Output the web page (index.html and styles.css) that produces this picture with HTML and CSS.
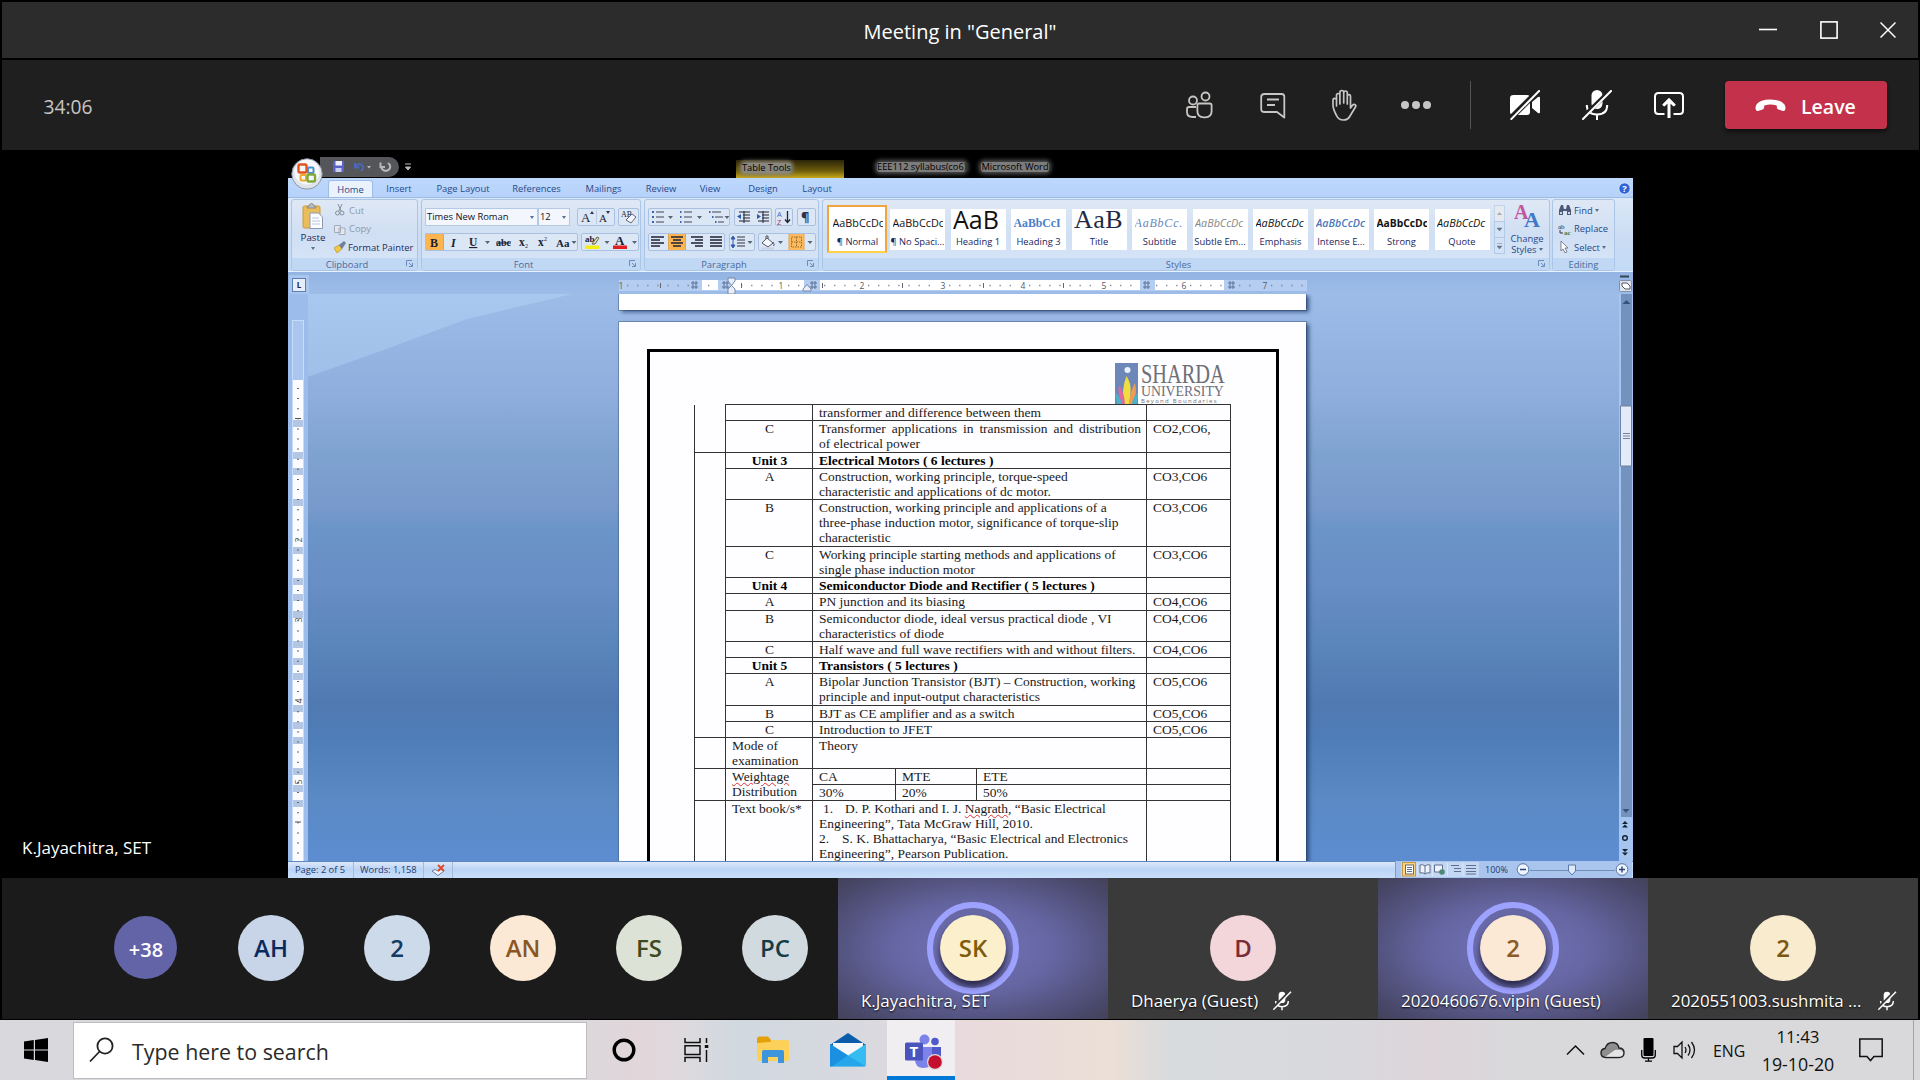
FILE: index.html
```html
<!DOCTYPE html>
<html lang="en">
<head>
<meta charset="utf-8">
<title>Meeting in "General"</title>
<link rel="stylesheet" href="styles.css">
</head>
<body>
<div class="screen">
  <header class="titlebar">
    <span class="side"></span>
    <h1>Meeting in "General"</h1>
    <div class="side winbtns">
      <svg width="18" height="20"><path d="M0 9.5h18" stroke="#fff" stroke-width="1.6"/></svg>
      <svg width="18" height="20"><rect x=".9" y="1.9" width="16.2" height="16.2" fill="none" stroke="#fff" stroke-width="1.6"/></svg>
      <svg width="16" height="20"><path d="M.5 2.5l15 15M15.5 2.5l-15 15" stroke="#fff" stroke-width="1.5"/></svg>
    </div>
  </header>

  <div class="toolbar">
    <span class="timer">34:06</span>
    <div class="tools">
      <svg width="28" height="30" class="i-people" fill="none" stroke="#c8c6c4" stroke-width="1.8"><circle cx="7" cy="10.5" r="4"/><circle cx="19.5" cy="6.5" r="4"/><path d="M10 17H3.2Q1 17 1 19.2V22q0 5 5.5 5H10M13.2 13.5h10.6q1.8 0 1.8 1.8v6q0 6-6.3 6h-1.6q-6.3 0-6.3-6v-6q0-1.8 1.8-1.8z"/></svg>
      <svg width="26" height="30" class="i-chat" fill="none" stroke="#c8c6c4" stroke-width="1.8"><path d="M4.500 4h17q2.800 0 2.800 2.800V27.500L17 22H4.500Q1.200 22 1.200 19V7q0-3 3.300-3zM7 9.500h12M7 15h8" stroke-linejoin="round"/></svg>
      <svg width="26" height="32" class="i-hand" fill="none" stroke="#c8c6c4" stroke-width="1.700" stroke-linejoin="round" stroke-linecap="round"><path d="M5.500 17V6.500q0-2 1.700-2t1.700 2V15M8.900 14V3.500q0-2 1.900-2t1.900 2V14M12.700 14V4q0-2 1.800-2t1.800 2v11M16.300 15V7.500q0-1.800 1.600-1.800t1.600 1.800V19l1.800-2.500q1.500-1.800 3-.7.900.8.300 2L19 27q-2 4-6.500 4-5 0-7-4.500Q2 20 2 16V11q0-1.700 1.700-1.700T5.500 11"/></svg>
      <svg width="30" height="10" class="i-dots" fill="#c8c6c4"><circle cx="4" cy="5" r="4"/><circle cx="15" cy="5" r="4"/><circle cx="26" cy="5" r="4"/></svg>
      <span class="divider"></span>
      <svg width="30" height="30" class="i-cam" fill="#fff"><path d="M3.500 5H17q3 0 3 3v14q0 3-3 3H3.500Q0 25 0 22V8q0-3 3.500-3zM22 12l6-5q2-1 2 1v14q0 2-2 1l-6-5z"/><path d="M30.500-1.500L-.5 29.500" stroke="#1f1f1f" stroke-width="5.500"/><path d="M29.700.3L.7 29.700" stroke="#fff" stroke-width="2"/></svg>
      <svg width="30" height="30" class="i-mic"><rect x="9.500" y="0" width="11" height="19" rx="5.500" fill="#fff"/><path d="M4.800 15q0 9.500 10.200 9.500T25.200 15M15 24.500V30" fill="none" stroke="#fff" stroke-width="2"/><path d="M31-2L-1 29" stroke="#1f1f1f" stroke-width="4.500"/><path d="M29.700.3L.3 29.700" stroke="#fff" stroke-width="2"/></svg>
      <svg width="30" height="30" class="i-share" fill="none" stroke="#fff" stroke-width="2"><path d="M10.500 24H4.500Q1 24 1 20.500V6.500Q1 3 4.500 3h21Q29 3 29 6.500v14q0 3.500-3.500 3.500h-6M15 28V10.500M9 15.500l6-6 6 6"/><path d="M15 28V11M9.500 15.500L15 10l5.500 5.500" stroke-width="3"/></svg>
      <button class="leave">
        <svg width="31" height="14"><path d="M15.500 1.500Q26 1.500 29.500 6.500 31.200 9.500 30 12q-.6 1.200-2 .9l-4.500-1.300q-1.300-.4-1.500-1.700L21.600 7.600Q15.500 5.600 9.400 7.600L9 9.900q-.2 1.300-1.500 1.700L3 12.900q-1.400.3-2-.9Q-.2 9.500 1.500 6.500 5 1.500 15.500 1.500z" fill="#fff"/></svg>
        Leave
      </button>
    </div>
  </div>

  <main class="stage">
    <span class="presenter">K.Jayachitra, SET</span>
    <div class="word">
      <div class="w-title">
        <div class="qat">
          <svg width="80" height="20"><g><path d="M13 4h11v11H13z" fill="#5a62c8"/><path d="M15.500 4h6.500v4.500h-6.500z" fill="#eef"/><path d="M15.500 11h6v4h-6z" fill="#c9cdf0"/></g><path d="M35 6v4.500h4.500M35.500 10q3-4.500 6.500-2 3 2.500-1 6" fill="none" stroke="#4a67b8" stroke-width="2"/><path d="M47 9l2 2.500 2-2.500z" fill="#bbb"/><path d="M60.500 5.500v4.500H65M68 6q4 3 1 6.500-3.500 3-7-.5l-1-2" fill="none" stroke="#b8b8b8" stroke-width="2"/></svg>
        </div>
        <svg class="qat-more" width="8" height="10"><path d="M1 2h6M1.500 5h5L4 8z" stroke="#bbb" fill="#bbb" stroke-width="1"/></svg>
        <div class="ctx"><span>Table Tools</span></div>
        <div class="doc-name"><span>EEE112 syllabus(co6)</span><span>Microsoft Word</span></div>
      </div>
      <svg class="office" width="32" height="32"><circle cx="16" cy="16" r="15.200" fill="#dfe3ea" stroke="#8c95a5"/><circle cx="16" cy="14" r="12.500" fill="#f6f7fa"/><g fill="none" stroke-width="2.400"><rect x="7.500" y="6.500" width="8" height="8" rx="1.500" stroke="#e2531d"/><rect x="17" y="9.500" width="5.500" height="5.500" rx="1" stroke="#4b8ed0" stroke-width="2"/><rect x="9.500" y="17" width="5.500" height="5.500" rx="1" stroke="#f0a92b" stroke-width="2"/><rect x="16.500" y="16.500" width="7.500" height="7" rx="1.500" stroke="#7fa93b"/></g></svg>

      <nav class="w-tabs">
        <span class="tab on">Home</span><span class="tab t2">Insert</span><span class="tab t3">Page Layout</span><span class="tab t4">References</span><span class="tab t5">Mailings</span><span class="tab t6">Review</span><span class="tab t7">View</span><span class="tab t8">Design</span><span class="tab t9">Layout</span>
        <svg class="help" width="13" height="13"><circle cx="6.500" cy="6.500" r="5.700" fill="#2e63d6" stroke="#dfe9ff"/><text x="4.200" y="10" font-size="9.500" font-weight="bold" fill="#fff">?</text></svg>
      </nav>

      <div class="ribbon">
        <section class="grp g-clip">
          <div class="body">
            <div class="paste">
              <svg width="24" height="27"><rect x="2" y="3" width="17" height="22" rx="1.500" fill="#e9bd5c" stroke="#c99a3a"/><path d="M6 5q0-2 2-2 .5-2.500 2.500-2.500T13 3q2 0 2 2z" fill="#b9bcc2" stroke="#777" stroke-width=".7"/><path d="M9 10h8.500l4 4v11.500H9z" fill="#fdfdff" stroke="#8c9bb8"/><path d="M11 15h7M11 18h8M11 21h8" stroke="#b8c5dd"/></svg>
              <span>Paste</span><i class="car"></i>
            </div>
            <div class="clip-list">
              <span class="dim"><svg width="12" height="12"><path d="M4 0l3 7M8 0L5 7" stroke="#888f9c" fill="none"/><circle cx="3.500" cy="9" r="2" fill="none" stroke="#888f9c"/><circle cx="8" cy="9" r="2" fill="none" stroke="#888f9c"/></svg>Cut</span>
              <span class="dim"><svg width="12" height="12"><path d="M.5 2.500h6v7h-6zM5 5h6v6.500H5z" fill="#e2e6ee" stroke="#a4abb8"/></svg>Copy</span>
              <span><svg width="12" height="12"><path d="M0 7l5-3 3 4-5 4z" fill="#f3c843" stroke="#b08a25" stroke-width=".6"/><path d="M5 4l5-4 2 2-4 6z" fill="#6f7f9c"/></svg>Format Painter</span>
            </div>
          </div>
          <footer>Clipboard<svg class="dlg" width="7" height="7"><path d="M.5 6V.5H6M3 3l3 3M6.500 3v3.500H3" fill="none" stroke="#6b8bb8"/></svg></footer>
        </section>

        <section class="grp g-font">
          <div class="body col">
            <div class="row">
              <div class="combo name">Times New Roman<i class="car"></i></div><div class="combo size">12<i class="car"></i></div>
              <svg class="box m7" width="38" height="18"><text x="4" y="14" class="serif" font-size="13">A</text><path d="M13 6l2-3 2 3zM29 3h4l-2 3z" fill="#335"/><text x="22" y="14" class="serif" font-size="11">A</text><path d="M19.500 2v14" stroke="#b9cbe4"/></svg>
              <svg class="box m3" width="21" height="18"><text x="3" y="9" class="serif" font-size="8">AB</text><path d="M8 12l6-6 4 3-5 6z" fill="#f4f4fb" stroke="#667"/></svg>
            </div>
            <div class="row">
              <svg class="box" width="153" height="18"><rect x=".5" y=".5" width="18" height="17" fill="#fdb550" stroke="#e0a458"/><g class="serif"><text x="5" y="13.500" font-size="12" font-weight="bold">B</text><text x="26" y="13.500" font-size="12" font-style="italic" font-weight="bold">I</text><text x="44" y="13" font-size="11.500" font-weight="bold" text-decoration="underline">U</text><text x="71" y="13" font-size="10" font-weight="bold" text-decoration="line-through">abc</text><text x="94" y="13" font-size="11.500" font-weight="bold">x</text><text x="100" y="15" font-size="6">2</text><text x="113" y="13" font-size="11.500" font-weight="bold">x</text><text x="119" y="8" font-size="6">2</text><text x="131" y="13.500" font-size="11" font-weight="bold">Aa</text></g><path d="M60 8h5l-2.500 3zM146.500 8h5l-2.500 3z" fill="#567"/></svg>
              <svg class="box m3" width="58" height="18"><text x="4" y="9" class="serif" font-size="9" font-weight="bold">ab</text><path d="M11 11l5-7 2 1-4 6z" fill="#e8dfae" stroke="#665"/><path d="M4 12.500h14v3.500H4z" fill="#f5ee15"/><path d="M23.500 8h5l-2.500 3zM51 8h5l-2.500 3z" fill="#567"/><text x="34" y="11.500" class="serif" font-size="13" font-weight="bold">A</text><path d="M32 12.500h14v3.500H32z" fill="#e21f1f"/></svg>
            </div>
          </div>
          <footer>Font<svg class="dlg" width="7" height="7"><path d="M.5 6V.5H6M3 3l3 3M6.500 3v3.500H3" fill="none" stroke="#6b8bb8"/></svg></footer>
        </section>

        <section class="grp g-para">
          <div class="body col">
            <div class="row">
              <svg class="box" width="82" height="18"><path d="M8 4h8M8 9h8M8 14h8M36 4h8M36 9h8M36 14h8M64 4h9M67 9h8M70 14h6" stroke="#445"/><path d="M4 4h2M4 9h2M4 14h2M32 4h1.500M32 9h1.500M32 14h1.500M61 4h1.500M64 9h1.500M67 14h1.500" stroke="#3c62b8" stroke-width="2"/><path d="M20 8h5l-2.500 3zM49 8h5l-2.500 3zM76.500 8h5l-2.500 3z" fill="#567"/></svg>
              <svg class="box m4" width="38" height="18"><path d="M5 4h11M9 7h7M9 10h7M5 13h11M24 4h11M28 7h7M28 10h7M24 13h11M10 3v12M29 3v12" stroke="#223"/><path d="M7 6v5L3 8.500zM23 6v5l4-2.500z" fill="#2f59b0"/></svg>
              <svg class="box m3" width="18" height="18"><text x="2" y="8.500" font-size="7.500" fill="#3c62b8">A</text><text x="2" y="16.500" font-size="7.500" fill="#a2384a">Z</text><path d="M12.500 3v11M10 11.500l2.500 3 2.500-3" fill="none" stroke="#223" stroke-width="1.300"/></svg>
              <svg class="box m4" width="19" height="18"><text x="4" y="14" font-size="13" font-weight="bold" fill="#334">¶</text></svg>
            </div>
            <div class="row">
              <svg class="box" width="77" height="18"><rect x="20.500" y=".5" width="17" height="17" fill="#fdb550" stroke="#e0a458"/><path d="M3 4h13M3 7h9M3 10h13M3 13h9M23 4h12M25 7h8M23 10h12M25 13h8M43 4h12M47 7h8M43 10h12M47 13h8M62 4h12M62 7h12M62 10h12M62 13h12" stroke="#1d2233" stroke-width="1.400"/></svg>
              <svg class="box m4" width="26" height="18"><path d="M8 4h8M8 7h8M8 10h8M8 13h8" stroke="#334"/><path d="M4 4v10M2 6l2-3 2 3zM2 12l2 3 2-3z" fill="#2f59b0" stroke="#2f59b0"/><path d="M18.500 8h5l-2.500 3z" fill="#567"/></svg>
              <svg class="box m3" width="58" height="18"><path d="M4 10l5-5 6 5-5 4z" fill="#f5f8fd" stroke="#556"/><path d="M8 6V3h2v3M15 9q2 3 .5 4" fill="none" stroke="#556"/><path d="M3 15.500h13" stroke="#c9d2e2" stroke-width="2"/><path d="M20 8h5l-2.500 3z" fill="#567"/><rect x="31" y=".5" width="15" height="17" fill="#fdbb5e" stroke="#e0a458"/><path d="M33.500 4h10v10h-10zM38.500 4v10M33.500 9h10" fill="none" stroke="#9a6b2a" stroke-dasharray="1.500 1"/><path d="M49.500 8h5L52 11z" fill="#567"/></svg>
            </div>
          </div>
          <footer>Paragraph<svg class="dlg" width="7" height="7"><path d="M.5 6V.5H6M3 3l3 3M6.500 3v3.500H3" fill="none" stroke="#6b8bb8"/></svg></footer>
        </section>

        <section class="grp g-styles">
          <div class="body">
            <div class="gallery">
              <div class="st sel"><b class="s-n">AaBbCcDc</b><span>¶ Normal</span></div>
              <div class="st"><b class="s-n">AaBbCcDc</b><span>¶ No Spaci...</span></div>
              <div class="st"><b class="s-h1">AaB</b><span>Heading 1</span></div>
              <div class="st"><b class="s-h3">AaBbCcI</b><span>Heading 3</span></div>
              <div class="st"><b class="s-t">AaB</b><span>Title</span></div>
              <div class="st"><b class="s-sub">AaBbCc.</b><span>Subtitle</span></div>
              <div class="st"><b class="s-se">AaBbCcDc</b><span>Subtle Em...</span></div>
              <div class="st"><b class="s-em">AaBbCcDc</b><span>Emphasis</span></div>
              <div class="st"><b class="s-ie">AaBbCcDc</b><span>Intense E...</span></div>
              <div class="st"><b class="s-st">AaBbCcDc</b><span>Strong</span></div>
              <div class="st"><b class="s-em">AaBbCcDc</b><span>Quote</span></div>
            </div>
            <svg class="gal-sc" width="11" height="50"><rect x=".5" y=".5" width="10" height="16" fill="#e6e9ef" stroke="#c5d3e8"/><rect x=".5" y="16.500" width="10" height="16" fill="#d3e2f6" stroke="#b4c9e6"/><rect x=".5" y="32.500" width="10" height="16" fill="#d3e2f6" stroke="#b4c9e6"/><path d="M3 10l2.500-3L8 10z" fill="#aab"/><path d="M3 23h5l-2.500 3zM3 41h5l-2.500 3zM3 38.500h5" fill="#678" stroke="#678" stroke-width=".5"/></svg>
            <div class="change">
              <svg width="26" height="25"><text x="0" y="16" class="serif" font-size="20" font-weight="bold" style="fill:#c2569c">A</text><text x="10" y="24" class="serif" font-size="22" font-weight="bold" style="fill:#3f78c4">A</text></svg>
              <span>Change</span><span>Styles <i class="car"></i></span>
            </div>
          </div>
          <footer>Styles<svg class="dlg" width="7" height="7"><path d="M.5 6V.5H6M3 3l3 3M6.500 3v3.500H3" fill="none" stroke="#6b8bb8"/></svg></footer>
        </section>

        <section class="grp g-edit">
          <div class="body ed">
            <span><svg width="14" height="12"><path d="M1 11V6l2-5h2l1 4h2l1-4h2l2 5v5H9V7H5v4z" fill="#4c5a78"/><path d="M2 8h2v2H2zM10 8h2v2h-2z" fill="#cfd8ea"/></svg>Find <i class="car"></i></span>
            <span><svg width="14" height="12"><text x="0" y="6" class="serif" font-size="7">ab</text><text x="6" y="12" class="serif" font-size="7" font-weight="bold" style="fill:#4d7a30">ac</text><path d="M2 7v3h3" fill="none" stroke="#335"/></svg>Replace</span>
            <span><svg width="14" height="12"><path d="M3 0l7 7H7l2 4-2 .8L5 8 3 10z" fill="#fff" stroke="#667" stroke-width=".8"/></svg>Select <i class="car"></i></span>
          </div>
          <footer>Editing</footer>
        </section>
      </div>

      <div class="ruler-row">
        <div class="tabsel">L</div>
        <svg class="hruler" width="690" height="22" viewBox="618 272 690 22">
          <rect x="619" y="280" width="688" height="11" fill="#b4cdf0"/>
          <path d="M702 280h16v10h-16zM732 280h72v10h-72zM820 280h320v10H820zM1155 280h69v10h-69z" fill="#fff"/>
          <path d="M627 285.500H690M708 285.500h8M741 285.500h34M788 285.500h14M824 285.500h32M868 285.500h69M949 285.500h69M1029 285.500h69M1110 285.500h28M1156 285.500h22M1190 285.500h33M1239 285.500h20M1271 285.500h32" stroke="#7f8797" stroke-width="1.500" stroke-dasharray="1.300 8.800"/>
          <path d="M822.500 283v5M902.500 283v5M983.500 283v5M1063.500 283v5M741.500 283v5M660.500 283v5" stroke="#667"/>
          <path d="M691 283h7M691 287h7M693 281v8M696 281v8M722 283h7M722 287h7M724 281v8M727 281v8M810 283h7M810 287h7M812 281v8M815 281v8M1143 283h7M1143 287h7M1145 281v8M1148 281v8M1228 283h7M1228 287h7M1230 281v8M1233 281v8" stroke="#5c7299"/>
          <path d="M728 278h7v3l-3.500 4.500L728 281zM728 294v-5l3.500-3.500 3.500 3.500v5zM803 289l4-4.500 4 4.500v2h-8z" fill="#e8eef9" stroke="#7688a8"/>
          <g font-size="8.500" fill="#55585f" text-anchor="middle"><text x="621" y="288.500">1</text><text x="781" y="288.500">1</text><text x="862" y="288.500">2</text><text x="943" y="288.500">3</text><text x="1023" y="288.500">4</text><text x="1104" y="288.500">5</text><text x="1184" y="288.500">6</text><text x="1265" y="288.500">7</text></g>
        </svg>
        <svg class="vtoggle" width="13" height="18"><path d="M1 1.500h9" stroke="#345" stroke-width="2"/><rect x=".5" y="5.500" width="12" height="11" rx="1" fill="#dfe3ec" stroke="#8190ad"/><path d="M3 8h5l3 3v3H6l-3-3z" fill="#fff" stroke="#556"/></svg>
      </div>

      <div class="canvas">
        <svg class="vruler" width="20" height="567" viewBox="288 294 20 567">
          <rect x="288" y="294" width="20" height="567" fill="#9cbdec"/>
          <rect x="292.500" y="320.500" width="11" height="545" fill="#aac6ee" stroke="#c6dcfb"/>
          <rect x="293" y="380" width="10" height="485" fill="#fbfcff"/>
          <path d="M293 420h10v7h-10zM293 452h10v7h-10zM293 468h10v7h-10zM293 499h10v7h-10zM293 547h10v7h-10zM293 578h10v7h-10zM293 594h10v7h-10zM293 611h10v7h-10zM293 641h10v7h-10zM293 658h10v7h-10zM293 673h10v7h-10zM293 705h10v7h-10zM293 722h10v7h-10zM293 737h10v7h-10zM293 768h10v7h-10zM293 785h10v7h-10zM293 800h10v7h-10z" fill="#b3c6e4"/>
          <path d="M298 388V861" stroke="#666" stroke-width="2" stroke-dasharray="1 9.100"/>
          <path d="M295 418.500h6M295 822h6" stroke="#555"/>
          <g font-size="9" fill="#555" text-anchor="middle"><text transform="translate(301.500 540) rotate(-90)">2</text><text transform="translate(301.500 620) rotate(-90)">3</text><text transform="translate(301.500 701) rotate(-90)">4</text><text transform="translate(301.500 782) rotate(-90)">5</text></g>
        </svg>
        <div class="desk">
          <div class="pages">
            <div class="page prev"></div>
            <div class="page cur">
              <div class="frame">
                <div class="logo">
                  <svg width="23" height="41"><rect width="23" height="41" fill="#6c87b8"/><circle cx="12.500" cy="7" r="3" fill="#e9f3ff"/><path d="M11.500 13q5 8 4 16l-1 12H9q-3-14 2.500-28z" fill="#f0dd3f"/><path d="M4 22q5 6 6 19H7Q2 30 4 22z" fill="#e0679b"/><path d="M20 20q-5 8-6 21h3q6-10 3-21z" fill="#ef9a55"/><path d="M0 30q5 3 7 11H2zM23 30q-5 3-6 11h5z" fill="#4bb3c9"/></svg>
                  <div class="logo-t"><strong>SHARDA</strong><em>UNIVERSITY</em><small>Beyond Boundaries</small></div>
                </div>
                <table class="syl">
                  <colgroup><col class="c1"><col class="c2"><col class="c3"><col class="c4"><col class="c5"><col class="c6"></colgroup>
                  <tr class="h16"><td rowspan="2" class="notop"></td><td></td><td colspan="3">transformer and difference between them</td><td></td></tr>
                  <tr class="h32"><td class="c">C</td><td colspan="3" class="just">Transformer applications in transmission and distribution of electrical power</td><td>CO2,CO6,</td></tr>
                  <tr class="h16 u"><td rowspan="12"></td><td class="c">Unit 3</td><td colspan="3">Electrical Motors ( 6 lectures )</td><td></td></tr>
                  <tr class="h31"><td class="c">A</td><td colspan="3">Construction, working principle, torque-speed<br>characteristic and applications of dc motor.</td><td>CO3,CO6</td></tr>
                  <tr class="h47"><td class="c">B</td><td colspan="3">Construction, working principle and applications of a<br>three-phase induction motor, significance of torque-slip<br>characteristic</td><td>CO3,CO6</td></tr>
                  <tr class="h31"><td class="c">C</td><td colspan="3">Working principle starting methods and applications of<br>single phase induction motor</td><td>CO3,CO6</td></tr>
                  <tr class="h16 u"><td class="c">Unit 4</td><td colspan="3">Semiconductor Diode and Rectifier ( 5 lectures )</td><td></td></tr>
                  <tr class="h17"><td class="c">A</td><td colspan="3">PN junction and its biasing</td><td>CO4,CO6</td></tr>
                  <tr class="h31"><td class="c">B</td><td colspan="3">Semiconductor diode, ideal versus practical diode , VI<br>characteristics of diode</td><td>CO4,CO6</td></tr>
                  <tr class="h16"><td class="c">C</td><td colspan="3">Half wave and full wave rectifiers with and without filters.</td><td>CO4,CO6</td></tr>
                  <tr class="h16 u"><td class="c">Unit 5</td><td colspan="3">Transistors ( 5 lectures )</td><td></td></tr>
                  <tr class="h32"><td class="c">A</td><td colspan="3">Bipolar Junction Transistor (BJT) – Construction, working<br>principle and input-output characteristics</td><td>CO5,CO6</td></tr>
                  <tr class="h16"><td class="c">B</td><td colspan="3">BJT as CE amplifier and as a switch</td><td>CO5,CO6</td></tr>
                  <tr class="h16"><td class="c">C</td><td colspan="3">Introduction to JFET</td><td>CO5,CO6</td></tr>
                  <tr class="h31"><td></td><td>Mode of<br>examination</td><td colspan="3">Theory</td><td></td></tr>
                  <tr class="h16"><td rowspan="2"></td><td rowspan="2"><u>Weightage</u><br>Distribution</td><td>CA</td><td>MTE</td><td>ETE</td><td></td></tr>
                  <tr class="h16"><td>30%</td><td>20%</td><td>50%</td><td></td></tr>
                  <tr class="h80"><td></td><td>Text book/s*</td><td colspan="3"><span class="n1">1.</span>D. P. Kothari and I. J. <u>Nagrath</u>, “Basic Electrical<br>Engineering”, Tata McGraw Hill, 2010.<br><span class="n2">2.</span>S. K. Bhattacharya, “Basic Electrical and Electronics<br>Engineering”, Pearson Publication.</td><td></td></tr>
                </table>
              </div>
            </div>
          </div>
        </div>
        <svg class="vscroll" width="14" height="567" viewBox="1619 294 14 567"><rect x="1619" y="294" width="14" height="567" fill="#a5c4f0"/><rect x="1621" y="294" width="11" height="523" fill="#7392bd"/><path d="M1622.500 304l4-4 4 4z" fill="#36527f"/><rect x="1620.500" y="406" width="11" height="60" fill="#e3eafa" stroke="#6f83a6"/><path d="M1623 433.500h7M1623 436h7M1623 438.500h7" stroke="#74819c"/><path d="M1622.500 809h7l-3.500 4z" fill="#36527f"/><path d="M1625 821l3 3h-6zM1625 824.500l3 3h-6zM1622 849h6l-3 3zM1622 852.500h6l-3 3z" fill="#123"/><circle cx="1625" cy="838" r="2.300" fill="none" stroke="#123" stroke-width="1.400"/></svg>
      </div>

      <div class="status">
        <span class="sp1">Page: 2 of 5</span><span class="sp2">Words: 1,158</span>
        <span class="sp3"><svg width="15" height="13"><path d="M1 7q3-3 6 0 3-3 6 0l-6 4.500z" fill="#f2f5fb" stroke="#6b7fa6"/><path d="M7 1l6 6M13 1L7 7" stroke="#dd4b2b" stroke-width="1.800"/></svg></span>
        <div class="views">
          <svg width="236" height="17" viewBox="1396 861 236 17"><rect x="1401" y="862" width="78" height="15" fill="#c3d6f2"/><rect x="1402.500" y="862.500" width="13" height="13.500" fill="#fbd889" stroke="#c9963c"/><rect x="1405.500" y="865" width="8" height="9" fill="#fff" stroke="#667"/><path d="M1407 867.500h5M1407 869.500h5M1407 871.500h5M1451 865.500h8M1454 868.500h7M1454 871.500h7M1466 865.500h10M1466 868.500h10M1466 871.500h10M1466 874h10" stroke="#5d6f90"/><path d="M1420 865q3-1 5 1 2-2 5-1v8q-3-1-5 1-2-2-5-1zM1425 866v8M1434.500 865h8v7h-8z" fill="#eef3fb" stroke="#5d6f90"/><circle cx="1442" cy="872" r="2.800" fill="#4c8a78"/><path d="M1417.500 863v13M1432.500 863v13M1447.500 863v13M1463 863v13" stroke="#dce8fa"/><text x="1485" y="872.500" font-size="9" fill="#1c3970">100%</text><path d="M1530 870.500h85" stroke="#6f8fbd"/><path d="M1568.500 865h7v6l-3.500 4-3.500-4z" fill="#dfe9f9" stroke="#5c78a8"/><g fill="#eef4fd" stroke="#5674a5"><circle cx="1523" cy="869.500" r="5.800"/><circle cx="1622" cy="869.500" r="5.800"/></g><path d="M1520 869.500h6M1619 869.500h6M1622 866.500v6" stroke="#2a4576" stroke-width="1.400"/></svg>
        </div>
      </div>
    </div>
  </main>

  <div class="roster">
    <div class="others">
      <span class="av more">+38</span><span class="av a1">AH</span><span class="av a2">2</span><span class="av a3">AN</span><span class="av a4">FS</span><span class="av a5">PC</span>
    </div>
    <div class="tile talk"><span class="ring"><span class="av sk">SK</span></span><p>K.Jayachitra, SET</p></div>
    <div class="tile"><span class="av d">D</span><p>Dhaerya (Guest)<svg width="20" height="20" viewBox="0 0 30 30"><rect x="10" y="1" width="10" height="17" rx="5" fill="#fff"/><path d="M5.500 15q0 8.500 9.500 8.500t9.500-8.500M15 23.500V29" fill="none" stroke="#fff" stroke-width="2.200"/><path d="M30-3L-1 28" stroke="#3a3a3a" stroke-width="3.500"/><path d="M28.500 1L2 28" stroke="#fff" stroke-width="2.200"/></svg></p></div>
    <div class="tile talk"><span class="ring"><span class="av v">2</span></span><p>2020460676.vipin (Guest)</p></div>
    <div class="tile"><span class="av s">2</span><p class="spread">2020551003.sushmita ...<svg width="20" height="20" viewBox="0 0 30 30"><rect x="10" y="1" width="10" height="17" rx="5" fill="#fff"/><path d="M5.500 15q0 8.500 9.500 8.500t9.500-8.500M15 23.500V29" fill="none" stroke="#fff" stroke-width="2.200"/><path d="M30-3L-1 28" stroke="#3a3a3a" stroke-width="3.500"/><path d="M28.500 1L2 28" stroke="#fff" stroke-width="2.200"/></svg></p></div>
  </div>

  <div class="taskbar">
    <div class="start"><svg width="24" height="24"><path d="M0 3.500l9.800-1.400v9.300H0zM11 1.900L24 0v11.400H11zM0 12.600h9.800v9.300L0 20.500zM11 12.600h13V24l-13-1.900z"/></svg></div>
    <div class="search"><svg width="26" height="26" fill="none" stroke="#222" stroke-width="1.800"><circle cx="16" cy="9" r="7.600"/><path d="M10.600 14.500L1 24.500"/></svg><span>Type here to search</span></div>
    <div class="pins">
      <svg class="p1" width="24" height="24"><circle cx="12" cy="12" r="9.800" fill="none" stroke="#000" stroke-width="3.400"/></svg>
      <svg class="p2" width="26" height="24" fill="none" stroke="#111" stroke-width="1.500"><path d="M1 0v4.500h15V0M1 24v-4.500h15V24M1 7.800h15v8.700H1zM22.500 0v5M22.500 12v12"/><path d="M20.800 7h3.500v3h-3.500z" fill="#111" stroke="none"/></svg>
      <svg class="p3" width="34" height="28"><path d="M1 3q0-2.500 2-2.500h9l3 3.500v6H1z" fill="#e3a008"/><path d="M1 7l13-1 3-2h14q2 0 2 2v17q0 2-2 2H3q-2 0-2-2z" fill="#fdd05a"/><path d="M6 27V16q0-2 2-2h18q2 0 2 2v11h-6v-6H12v6z" fill="#3d96dd"/></svg>
      <svg class="p4" width="36" height="34"><path d="M0 12L18 0l18 12v6H0z" fill="#0b5cab"/><path d="M3 10h30v14H3z" fill="#f5f7fa"/><path d="M0 11l18 11.500L36 11v20.500q0 2-2 2H2q-2 0-2-2z" fill="#35bdf2"/><path d="M0 11l18 11.500L2 33.500H0z" fill="#1b8fe0"/><path d="M0 33.500l18-11 18 11z" fill="#1a96e6" opacity=".55"/></svg>
      <div class="teams"><svg width="38" height="37"><circle cx="19.500" cy="5.500" r="5" fill="#7b83eb"/><circle cx="30" cy="7.500" r="3.800" fill="#5059c9"/><path d="M22 13h14v10q0 8-7 8-5 0-7-4z" fill="#5059c9"/><path d="M10 13h17v12q0 9-8.500 9T10 25z" fill="#7b83eb"/><rect x="0" y="8.500" width="18" height="18" rx="1.500" fill="#4b53bc"/><text x="4.500" y="23" font-size="15" font-weight="bold" fill="#fff">T</text><circle cx="30" cy="28" r="8" fill="#ddd"/><circle cx="30" cy="28" r="6.800" fill="#c50f2e"/></svg></div>
    </div>
    <div class="tray">
      <svg class="y1" width="19" height="12" fill="none" stroke="#111" stroke-width="1.500"><path d="M1 10.500l8.500-8.500 8.500 8.500"/></svg>
      <svg class="y2" width="25" height="18"><path d="M6 16.500q-5 0-5-4.500 0-4 4-4.500Q7 1.500 12.500 1.500T19 7q5 0 5 4.800 0 4.700-5 4.700z" fill="#8e8e8e" stroke="#222" stroke-width="1.400"/><path d="M5 16l10-7q8-1 8.200 3 0 3.800-4 3.800H6z" fill="#e4e4e4"/></svg>
      <svg class="y3" width="15" height="24"><rect x="2.500" y="0" width="10" height="18" rx="1" fill="#000"/><path d="M.7 12v5q0 3 3 3h7.600q3 0 3-3v-5M7.500 20v3M4 23.200h7" fill="none" stroke="#000" stroke-width="1.300"/></svg>
      <svg class="y4" width="24" height="20" fill="none" stroke="#111" stroke-width="1.300"><path d="M1 6.500h3.500L9 2v16l-4.500-4.500H1zM12 7q2 3 0 6M15 4.500q4 5.500 0 11M18.500 2q6 8 0 16"/></svg>
      <span class="lang">ENG</span>
      <div class="clock"><span class="time">11:43</span><span class="date">19-10-20</span></div>
      <svg class="y5" width="24" height="24" fill="none" stroke="#111" stroke-width="1.500"><path d="M.8 1h22.400v17.500H15l-3.500 4-3.500-4H.8z"/></svg>
      <span class="peek"></span>
    </div>
  </div>
</div>
</body>
</html>
```
FILE: styles.css
```css
* { box-sizing: border-box; }
body { margin: 0; background: #000; font-family: "Open Sans", "Noto Sans", sans-serif; }
svg { display: block; flex: none; }
.screen { width: 1920px; height: 1080px; overflow: hidden; display: flex; flex-direction: column; }

/* meeting window */
.titlebar { height: 56px; margin: 2px 2px 2px; background: #2c2c2c; display: flex; align-items: center; flex: none; }
.titlebar h1 { margin: 0; font-size: 20px; font-weight: 400; color: #fff; line-height: 24px; padding: 3px 0 0; }
.side { flex: 1 1 0; min-width: 0; }
.winbtns { display: flex; justify-content: flex-end; gap: 42.500px; margin-right: 22px; }
.titlebar > span.side { margin-left: 22px; }
.toolbar { height: 90px; margin: 0 1px 0 2px; background: #1f1f1f; display: flex; justify-content: space-between; align-items: center; flex: none; padding: 0 32px 0 41.500px; }
.timer { font-size: 19.200px; color: #c8c6c4; padding-top: 2px; }
.tools { display: flex; align-items: center; }
.i-chat { margin-left: 46px; }
.i-hand { margin-left: 45px; }
.i-dots { margin-left: 44px; }
.divider { width: 1px; height: 48px; background: #555; margin-left: 39px; }
.i-cam { margin-left: 39px; }
.i-mic, .i-share { margin-left: 42px; }
.leave { margin-left: 41px; width: 162px; height: 48px; border: 0; border-radius: 4px; background: #c4314b; color: #fff; font: 600 19.500px "Open Sans", sans-serif; display: flex; align-items: center; gap: 15px; padding: 3px 0 0 30px; box-shadow: 0 3px 4px rgba(0,0,0,.5); }
.leave svg { margin-top: -4px; }

.stage { height: 728px; flex: none; display: flex; }
.presenter { width: 288px; padding-left: 22px; align-self: flex-end; margin-bottom: 18px; color: #fff; font-size: 17px; line-height: 24px; flex: none; }

/* shared word processor window */
.word { width: 1345px; height: 728px; position: relative; display: flex; flex-direction: column; font-size: 9.400px; color: #1e2b5a; }
.w-title { height: 28px; flex: none; display: flex; padding-left: 32px; }
.qat { width: 79px; height: 20px; margin-top: 7px; border-radius: 0 10px 10px 0; background: #55565a; }
.qat-more { margin: 12px 0 0 5px; }
.ctx { width: 108px; margin: 10px 0 0 324px; height: 18px; background: linear-gradient(#2a2408, #6d5c0c 60%, #c9a91a); line-height: 13px; padding: 1px 0 0 6px; font-size: 9.300px; color: #000; white-space: nowrap; }
.ctx span, .doc-name span { display: inline-block; height: 10px; background: #8a877c; box-shadow: 0 0 4px 2px #8a877c; line-height: 10px; margin-top: 1px; border-radius: 3px; }
.doc-name { margin: 11px 0 0 33px; display: flex; gap: 15px; font-size: 9.300px; color: #000; white-space: nowrap; }
.doc-name span { background: #7c7c7c; box-shadow: 0 0 4px 2px #555; }
.office { position: absolute; left: 3px; top: 8px; z-index: 2; }
.w-tabs { height: 20px; flex: none; background: linear-gradient(#bdd8fc, #b6d2fa); display: flex; padding-left: 40px; line-height: 22px; color: #27498a; border-bottom: 1px solid #9dbbe3; }
.tab { text-align: center; white-space: nowrap; width: 50px; }
.tab.on { width: 45px; margin-top: 2px; line-height: 17px; height: 17px; background: #eaf2fd; border-radius: 3px 3px 0 0; border: 1px solid #9fbde4; border-bottom: 0; }
.t2 { width: 52px; } .t3 { width: 76px; } .t4 { width: 71px; } .t5 { width: 63px; } .t6 { width: 52px; } .t7 { width: 46px; } .t8 { width: 60px; } .t9 { width: 48px; }
.help { margin: 4px 2px 0 auto; }
.ribbon { height: 74px; flex: none; background: linear-gradient(#dbe7f7, #c9dcf4 60%, #c3daf6); display: flex; padding: 1px 0 0 3px; gap: 3px; border-bottom: 1px solid #e6f2ff; }
.grp { height: 72px; border: 1px solid #abc5e6; border-radius: 3px; background: linear-gradient(#dfe8f5, #d0dff3 50%, #d6e5f8); display: flex; flex-direction: column; }
.grp .body { height: 59px; display: flex; }
.grp footer { position: relative; height: 12px; background: #c0d8f3; text-align: center; line-height: 13px; color: #4a6a9c; padding-right: 15px; }
.grp.g-edit footer { padding-right: 0; }
.dlg { position: absolute; right: 4px; top: 2px; }
.g-clip { width: 127px; } .g-font { width: 220px; } .g-para { width: 175px; } .g-styles { width: 728px; } .g-edit { width: 63px; margin-left: -1px; }
.car { display: inline-block; width: 0; height: 0; border: 2.500px solid transparent; border-top: 3px solid #5a6f93; border-bottom: 0; vertical-align: 2px; }
.paste { width: 42px; padding-top: 3px; display: flex; flex-direction: column; align-items: center; line-height: 16px; font-size: 9.800px; }
.paste .car { margin-top: 1px; }
.clip-list { display: flex; flex-direction: column; padding: 1px 0 0 0; }
.clip-list span { display: flex; align-items: center; gap: 2px; height: 18.500px; white-space: nowrap; }
.clip-list .dim { color: #8f98a8; gap: 3px; }
.body.col { flex-direction: column; padding: 8px 0 0 3px; gap: 7px; }
.row { display: flex; height: 18px; }
.box { border: 0; background: #dce7f6; outline: 1px solid #a9c0e0; outline-offset: -1px; border-radius: 2px; }
.serif, .serif text { font-family: "Liberation Serif", serif; fill: #1b2233; }
.m7 { margin-left: 7px; } .m3 { margin-left: 3px; } .m4 { margin-left: 4px; }
.combo { background: #f3f7fd; border: 1px solid #b4c9e6; height: 18px; line-height: 16px; display: flex; justify-content: space-between; align-items: center; padding: 0 3px 0 1px; color: #112; }
.combo.name { width: 113px; } .combo.size { width: 32px; }
.gallery { width: 668px; display: flex; padding: 5px 0 0 4px; gap: 5.500px; }
.st { width: 55px; height: 41px; margin-top: 4px; background: #fff; overflow: hidden; text-align: center; white-space: nowrap; flex: none; }
.st.sel { width: 60px; height: 48px; margin: 0 -2.500px 0 0; border: 2px solid #efa73d; border-bottom-color: #ffd24d; padding: 2px 0 0 1px; }
.st b { display: block; height: 27px; line-height: 28px; font-weight: 400; overflow: hidden; color: #111; font-size: 10.800px; width: 50px; margin: 0 auto; text-align: left; }
.st span { display: block; line-height: 12px; color: #1b2560; }
.st .s-h1 { font-size: 25px; line-height: 21px; }
.st .s-t { font: 26px/22px "Liberation Serif", serif; color: #1d2b46; letter-spacing: .5px; }
.st .s-h3 { font: bold 11.800px/28px "Liberation Serif", serif; color: #4a80c8; }
.st .s-sub { font: italic 12px/28px "Liberation Serif", serif; color: #6a86c0; letter-spacing: .8px; }
.st .s-se { font-style: italic; color: #888; }
.st .s-em { font-style: italic; }
.st .s-ie { font-style: italic; color: #4a78bd; font-weight: 600; font-size: 10.700px; }
.st .s-st { font-weight: 700; font-size: 10.300px; }
.gal-sc { margin-top: 5px; margin-left: 3px; }
.change { width: 44px; padding-top: 3px; display: flex; flex-direction: column; align-items: center; line-height: 10.500px; color: #27498a; }
.change svg { margin-bottom: 6px; }
.body.ed { flex-direction: column; padding: 1px 0 0 5px; color: #27498a; }
.ed span { display: flex; align-items: center; gap: 2px; height: 18.500px; }
.ruler-row { height: 22px; flex: none; background: linear-gradient(#93b4e3, #9dbce8); display: flex; }
.tabsel { width: 14px; height: 14px; margin: 6px 0 0 4px; border: 1px solid #5c7fb8; outline: 3px solid #a9c6ef; outline-offset: 0; background: #e6eefa; font-weight: 700; font-size: 8px; line-height: 12px; text-align: center; color: #223; }
.hruler { margin-left: 312px; }
.vtoggle { margin: 3px 1px 0 auto; }

.canvas { height: 567px; flex: none; display: flex; overflow: hidden; }
.desk { width: 1311px; height: 567px; background: linear-gradient(#9dbce8 0, #8faedd 100px, #7fa3d1 158px, #7899cb 214px, #6b95c9 234px, #688ec5 290px, #5a86bb 350px, #5079b1 411px, #4f7db8 445px, #5a89c3 503px, #5d8dd0 560px); position: relative; }
.desk::before { content: ""; position: absolute; left: 0; top: 0; width: 264px; height: 90px; background: linear-gradient(#a8c8f0, #9fbfe8); clip-path: polygon(0 0, 100% 0, 60% 28%, 25% 66%, 0 92%); }
.pages { position: relative; width: 687px; margin-left: 311px; }
.page { background: #fff; box-shadow: 3px 2px 4px rgba(30,55,100,.75), 0 0 0 1px rgba(70,95,140,.5); }
.prev { height: 16px; }
.cur { margin-top: 12px; height: 600px; padding: 27px 0 0 28px; background: #fefdff; }
.frame { width: 632px; height: 600px; border: 3px solid #000; padding: 11px 0 0 44px; }
.logo { display: flex; height: 41px; margin-left: 421px; gap: 3px; overflow: hidden; }
.logo-t { display: flex; flex-direction: column; width: 84px; font-family: "Liberation Serif", serif; color: #6d6f76; white-space: nowrap; }
.logo-t strong { font-weight: 400; font-size: 27.500px; line-height: 22px; height: 21px; transform: scaleX(.74); transform-origin: 0 0; }
.logo-t em { font-style: normal; font-size: 15px; line-height: 14px; transform: scaleX(.92); transform-origin: 0 0; }
.logo-t small { font: 6px/6px "Open Sans", sans-serif; letter-spacing: 1.300px; }
.syl { width: 537px; table-layout: fixed; border-collapse: collapse; font: 13.480px/15px "Liberation Serif", serif; color: #1a1a1a; }
.syl td { padding: 0 5px 0 6px; border: 1px solid #333; vertical-align: top; white-space: nowrap; }
.syl td.c { text-align: center; }
.syl td.just { white-space: normal; text-align: justify; }
.syl td.notop { border-top-style: hidden; }
.syl .u td { font-weight: 700; color: #000; }
.syl u { text-decoration: underline wavy #d33 .8px; text-underline-offset: 1px; }
.c1 { width: 31px; } .c2 { width: 87px; } .c3 { width: 83px; } .c4 { width: 81px; } .c5 { width: 170px; } .c6 { width: 84px; }
.h16 { height: 16px; } .h17 { height: 17px; } .h31 { height: 31px; } .h32 { height: 32px; } .h47 { height: 47px; } .h80 { height: 80px; }
.n1 { display: inline-block; width: 26px; padding-left: 4px; }
.n2 { display: inline-block; width: 23px; }
.status { height: 17px; flex: none; background: linear-gradient(#dbe8fb, #bcd4f5 45%, #c9dffa); border-top: 1px solid #5f86bd; display: flex; line-height: 16px; color: #1c3970; font-size: 9.300px; white-space: nowrap; }
.sp1 { width: 66px; padding-left: 7px; border-right: 1px solid #a0bbe0; }
.sp2 { width: 70px; padding-left: 6px; border-right: 1px solid #a0bbe0; }
.sp3 { width: 29px; padding: 2px 0 0 7px; border-right: 1px solid #a0bbe0; }
.views { margin: -1px 1px 0 auto; background: #a9c5ed; border-left: 1px solid #7d9cc9; }

/* participants */
.roster { height: 141px; flex: none; display: flex; margin: 0 2px 1px; }
.others { width: 836px; background: #1b1b1b; display: flex; align-items: center; gap: 60px; padding: 0 0 2px 112px; flex: none; }
.av { width: 66px; height: 66px; border-radius: 50%; display: flex; align-items: center; justify-content: center; font-size: 24px; font-weight: 600; flex: none; }
.av.more { width: 63px; height: 63px; background: #6264a7; color: #fff; font-size: 20px; padding: 3px 0 0 1px; margin-right: 1px; }
.a1 { background: #c8d4e8; color: #0a2a5e; } .a2 { background: #cddaea; color: #123c63; } .a3 { background: #fbe9d6; color: #8a5624; } .a4 { background: #dce2d6; color: #3d4a22; } .a5 { background: #d0dadf; color: #143c45; }
.sk { background: #fcefcb; color: #7e5c0b; } .d { background: #f3d6d9; color: #7a2d38; } .v { background: #fbe8d5; color: #8e5a28; } .s { background: #f8ebce; color: #7e5812; }
.tile { width: 270px; background: #3a3a3a; display: grid; grid-template: 100% / 100%; justify-items: center; align-items: center; flex: none; }
.tile > * { grid-area: 1 / 1; }
.tile > span { margin-bottom: 2px; }
.tile.talk { background: radial-gradient(ellipse at 50% 50%, #7070b4 10%, #6465a0 45%, #4a496c 85%, #434159); }
.ring { width: 92px; height: 92px; border-radius: 50%; border: 6px solid #9ea2ff; display: flex; align-items: center; justify-content: center; }
.ring .av { box-shadow: 0 5px 6px rgba(20,18,40,.75); }
.tile p { margin: 0 0 6px; padding: 0 21px 0 23px; width: 100%; align-self: end; color: #fff; font-size: 16.950px; line-height: 24px; display: flex; align-items: center; gap: 14px; white-space: nowrap; text-shadow: 0 1px 2px #000; }
.tile p.spread { justify-content: space-between; gap: 0; font-size: 16.850px; }

/* desktop taskbar */
.taskbar { height: 60px; flex: none; display: flex; background: linear-gradient(90deg, #d9d9dd 0, #d8d8dc 560px, #e2d6da 640px, #dcdade 690px, #d0d8e0 740px, #d8d9df 860px, #e8dadd 960px, #ecdfd6 1110px, #d8dbdd 1170px, #d9d9dd 1350px, #ddd5da 1430px, #d9d9dc 1520px, #d9d9dc); }
.start { width: 73px; padding: 18px 0 0 24px; }
.search { width: 514px; height: 57px; margin-top: 2px; border: 1px solid #bdbdc0; background: #fff; display: flex; align-items: center; gap: 17px; padding-left: 15px; font-size: 21.400px; color: #2a2a2a; }
.search svg { margin-top: -2px; }
.search span { padding-top: 2px; }
.pins { display: flex; align-items: center; margin-left: 25px; width: 344px; }
.p2 { margin-left: 48px; } .p3 { margin-left: 46px; } .p4 { margin-left: 40px; }
.teams { width: 68px; height: 60px; margin-left: 21px; background: #f0eef1; border-bottom: 4px solid #0078d7; padding: 14px 0 0 18px; flex: none; }
.tray { margin-left: auto; display: flex; align-items: center; width: 354px; }
.y2 { margin-left: 15px; } .y3 { margin-left: 16px; } .y4 { margin-left: 17px; }
.lang { margin-left: 16px; width: 34px; font-size: 15.900px; color: #111; padding-top: 2px; }
.clock { width: 76px; margin-left: 13px; display: flex; flex-direction: column; align-items: center; gap: 3px; font-size: 16.900px; line-height: 24px; color: #111; margin-top: 0; }
.date { font-size: 17.800px; }
.y5 { margin-left: 23px; }
.peek { width: 1px; height: 60px; margin-left: 30px; background: #a3a3a6; }
```
